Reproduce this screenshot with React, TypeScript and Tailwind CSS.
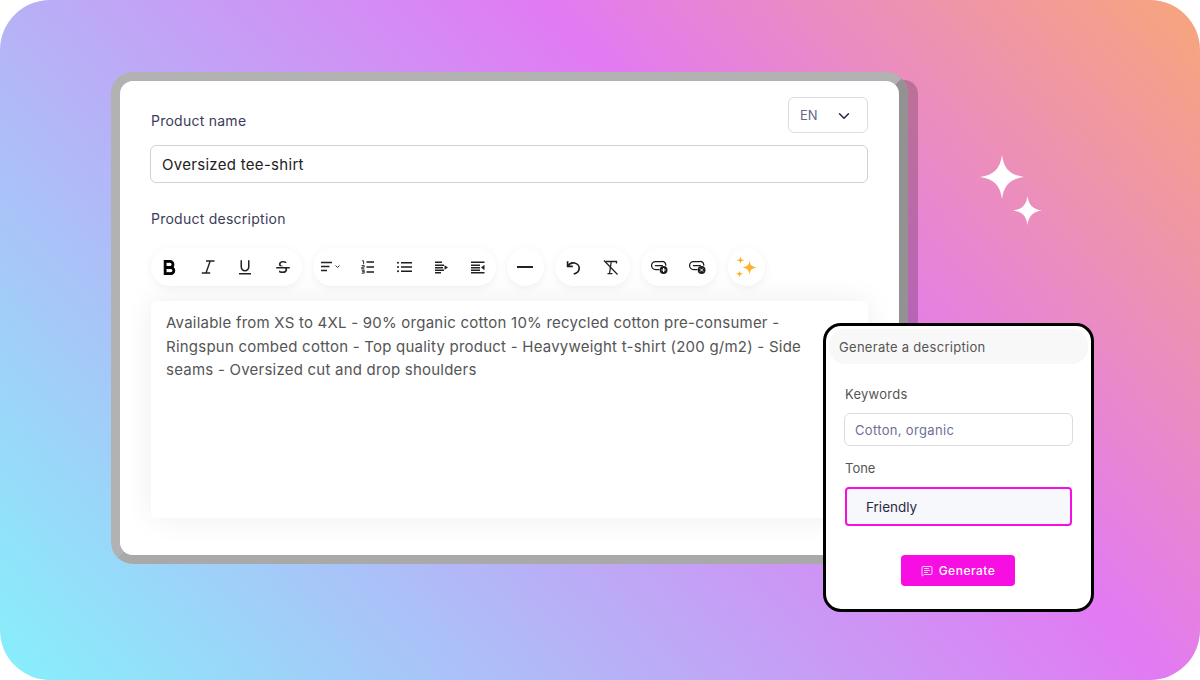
import { RiBold, RiStrikethrough, RiUnderline } from "react-icons/ri";
import { ChevronDown, MessageSquareText } from "lucide-react";

function AlignMenuIcon() {
  return (
    <svg width="20" height="12" viewBox="0 0 20 12" fill="none" stroke="#222" strokeWidth="1.3">
      <path d="M0 1.5h11M0 5.5h8.5M0 9.5h6" />
      <path d="M14.5 4.5l2 2 2-2" strokeWidth="0.9" />
    </svg>
  );
}

function ItalicIcon() {
  return (
    <svg width="14" height="14" viewBox="0 0 14 14" fill="none" stroke="#222" strokeWidth="1.4">
      <path d="M5 1h8.5M9.2 1L5 13M0.8 13h8.4" />
    </svg>
  );
}

function OrderedIcon() {
  return (
    <svg width="13" height="14" viewBox="0 0 13 14" fill="none" stroke="#1c1c1c">
      <path d="M5.5 2h7.5M5.5 7h7.5M5.5 12h7.5" strokeWidth="1.5" />
      <path d="M1 .8h1.6v3.4M.6 5.6h2.6v1.6H.8v1.6h2.6M.6 10.2h2.6v3H.6M1 11.7h2" strokeWidth="0.9" />
    </svg>
  );
}

function BulletIcon() {
  return (
    <svg width="15" height="12" viewBox="0 0 15 12" fill="#1c1c1c">
      <path d="M4 1h11v1.6H4zM4 5.2h11v1.6H4zM4 9.4h11V11H4z" />
      <circle cx="1" cy="1.8" r="1" />
      <circle cx="1" cy="6" r="1" />
      <circle cx="1" cy="10.2" r="1" />
    </svg>
  );
}

function OutdentIcon({ flip }: { flip?: boolean }) {
  // the two alignment buttons only differ by the width of the lines
  return flip ? (
    <svg width="14" height="13" viewBox="0 0 14 13" fill="#222">
      <path d="M0 0.5h13.5v1.4H0zM0 3.5h9v1.4H0zM0 6h9v1.4H0zM0 8.5h9v1.4H0zM0 11h13.5v1.4H0z" />
      <path d="M13.5 3.8v5.4L10 6.5z" />
    </svg>
  ) : (
    <svg width="13" height="13" viewBox="0 0 13 13" fill="#222">
      <path d="M0 0.5h7v1.4H0zM0 3.5h9v1.4H0zM0 6h8v1.4H0zM0 8.5h9v1.4H0zM0 11h6v1.4H0z" />
      <path d="M9.5 4.2v4.6L13 6.5z" />
    </svg>
  );
}

function UndoIcon() {
  return (
    <svg width="15" height="15" viewBox="0 0 15 15" fill="none" stroke="#1c1c1c" strokeWidth="1.7">
      <path d="M1.6 1.2v5.2h5.2" />
      <path d="M1.8 6.2C3.4 3.4 6 2.4 8.6 3c3 .7 5 3.4 4.5 6.2-.4 2.4-2.4 4.2-5.4 4.8" />
    </svg>
  );
}

function ClearFormatIcon() {
  return (
    <svg width="16" height="15" viewBox="0 0 16 15" fill="none" stroke="#222">
      <path d="M2.5 1.5h11v2" strokeWidth="1.3" />
      <path d="M8.2 2L6.5 13.5M4.5 13.6h5" strokeWidth="1.3" />
      <path d="M1 .5l13.5 14" strokeWidth="1.2" />
    </svg>
  );
}

function LinkBadgeIcon({ remove }: { remove?: boolean }) {
  return (
    <svg width="17" height="14" viewBox="0 0 17 14" fill="none">
      <path
        d="M8 9.5H4.6a4 4 0 0 1 0-8h6.2a4 4 0 0 1 4 3.6M4.4 5.5h7"
        stroke="#1c1c1c"
        strokeWidth="1.25"
        strokeLinecap="round"
      />
      <circle cx="12.6" cy="10" r="3.9" fill="#1c1c1c" />
      {remove ? (
        <path d="M11.1 8.5l3 3M14.1 8.5l-3 3" stroke="#fff" strokeWidth="1" />
      ) : (
        <path d="M12.6 8v4M10.6 10h4" stroke="#fff" strokeWidth="1.2" />
      )}
    </svg>
  );
}

function Star({ className }: { className: string }) {
  return (
    <svg className={className} viewBox="0 0 24 24">
      <path d="M12 0C13 7.5 16.5 11 24 12 16.5 13 13 16.5 12 24 11 16.5 7.5 13 0 12 7.5 11 11 7.5 12 0Z" fill="currentColor" />
    </svg>
  );
}

const toolbar = [
  {
    itemClass: "w-[37.75px]",
    icons: [
      <RiBold size={21} className="stroke-black text-black [stroke-width:1.2px]" />,
      <ItalicIcon />,
      <RiUnderline size={18} className="text-[#222]" />,
      <RiStrikethrough size={18} className="text-[#222]" />,
    ],
  },
  {
    itemClass: "w-[36.6px]",
    icons: [<AlignMenuIcon />, <OrderedIcon />, <BulletIcon />, <OutdentIcon />, <OutdentIcon flip />],
  },
  { itemClass: "w-[37px]", icons: [<div className="h-[1.5px] w-[16px] bg-[#222]" />] },
  { itemClass: "w-[37.5px]", icons: [<UndoIcon />, <ClearFormatIcon />] },
  { itemClass: "w-[38px]", icons: [<LinkBadgeIcon />, <LinkBadgeIcon remove />] },
];

export default function App() {
  return (
    <div className="h-[680px] w-[1200px] overflow-hidden bg-white font-['Inter',sans-serif]">
      <div className="relative flex h-full items-start rounded-[50px] bg-[linear-gradient(47.5deg,#86f0fb_0%,#e27af3_64%,#f7a67a_100%)] pl-[111px] pt-[72px]">
        <div className="h-[492px] w-[797px] rounded-[22px] border-[9px] border-[#b2b2b2] border-b-[#a9a9a9] border-r-[#929292] shadow-[18px_0_0_-8px_rgba(0,0,0,0.2)]">
          <div className="h-full rounded-[13px] bg-white pl-[30px] pr-[31px] pt-[16px]">
            <div className="flex items-end justify-between pl-px">
              <label className="pb-[2px] text-[14px] leading-[20px] tracking-[0.25px] text-[#3c3c58]">Product name</label>
              <div className="flex h-[36px] w-[80px] items-center justify-between rounded-[6px] border border-[#dcdce4] pl-[11px] pr-[14px] pt-px text-[13px] text-[#62688c]">
                EN
                <ChevronDown size={18} strokeWidth={2} className="text-[#26264a]" />
              </div>
            </div>
            <div className="mt-[12px] flex h-[38px] items-center rounded-[6px] border border-[#d2d2d6] pl-[11px] pt-[2px] text-[15px] tracking-[0.3px] text-[#222]">
              Oversized tee-shirt
            </div>
            <label className="mt-[26px] block pl-px text-[14px] leading-[20px] tracking-[0.25px] text-[#3c3c58]">Product description</label>
            <div className="ml-px mt-[19px] flex gap-[11px]">
              {toolbar.map((group, i) => (
                <div key={i} className="flex h-[38px] items-center rounded-full bg-white shadow-[0_2px_10px_rgba(0,0,0,0.06)]">
                  {group.icons.map((icon, j) => (
                    <div key={j} className={`flex h-full items-center justify-center ${group.itemClass}`}>
                      {icon}
                    </div>
                  ))}
                </div>
              ))}
              <div className="flex h-[38px] w-[37px] items-center justify-center rounded-full bg-white shadow-[0_2px_10px_rgba(0,0,0,0.06)]">
                <svg width="22" height="22" viewBox="0 0 22 22" fill="#fcb22e">
                  <path d="M14.5 4.5C15 9 16.5 10.5 21.5 11.5 16.5 12.5 15 14 14.5 19 14 14 12.5 12.5 7.5 11.5 12.5 10.5 14 9 14.5 4.5Z" />
                  <path d="M5.5 0.5C5.9 3 6.7 3.8 9.5 4.2 6.7 4.6 5.9 5.5 5.5 8 5.1 5.5 4.3 4.6 1.5 4.2 4.3 3.8 5.1 3 5.5 0.5Z" />
                  <path d="M4.5 14.5C4.8 16.5 5.5 17.2 8 17.7 5.5 18.2 4.8 19 4.5 21.5 4.2 19 3.5 18.2 1 17.7 3.5 17.2 4.2 16.5 4.5 14.5Z" />
                </svg>
              </div>
            </div>
            <div className="ml-px mt-[15px] h-[217px] rounded-[6px] bg-white py-[10px] pl-[15px] pr-[40px] text-[15px] leading-[23.5px] tracking-[0.23px] text-[#555] shadow-[0_0_30px_rgba(0,0,0,0.07)]">
              Available from XS to 4XL - 90% organic cotton 10% recycled cotton pre-consumer - Ringspun combed cotton - Top quality product - Heavyweight t-shirt (200 g/m2) - Side seams - Oversized cut and drop shoulders
            </div>
          </div>
        </div>

        <div className="ml-[72px] mt-[83px] h-[69px] w-[63px] flex-none text-white">
          <Star className="block h-[44px] w-[44px]" />
          <Star className="-mt-[3px] ml-[33px] block h-[29px] w-[29px]" />
        </div>

        {/* floating panel overlapping the editor */}
        <div className="absolute left-[823px] top-[323px] h-[289px] w-[271px] rounded-[18px] border-[3px] border-black bg-white p-[3px]">
          <div className="flex h-[35px] items-center rounded-[16px] bg-[#f8f8f8] pl-[10px] pt-[2px] text-[13px] tracking-[0.3px] text-[#555]">
            Generate a description
          </div>
          <div className="px-[15px]">
            <div className="mt-[21px] pl-px text-[13px] leading-[18px] tracking-[0.25px] text-[#555]">Keywords</div>
            <div className="mt-[10px] flex h-[33px] items-center rounded-[6px] border border-[#dcdcdc] pl-[10px] pt-[3px] text-[13px] tracking-[0.33px] text-[#6b7095]">
              Cotton, organic
            </div>
            <div className="mt-[13px] pl-px text-[13px] leading-[18px] text-[#555]">Tone</div>
            <div className="mx-px mt-[10px] flex h-[39px] items-center rounded-[4px] border-2 border-[#f50fe0] bg-[#f7f8fc] pl-[19px] pt-[2px] text-[13.5px] text-[#2a2a45]">
              Friendly
            </div>
            <div className="mt-[29px] flex justify-center pr-px">
              <button className="flex h-[31px] w-[114px] items-center justify-center gap-[6px] rounded-[4px] bg-[#f70ee2] text-[12px] font-medium tracking-[0.5px] text-white">
                <MessageSquareText size={12} strokeWidth={1.6} />
                Generate
              </button>
            </div>
          </div>
        </div>
      </div>
    </div>
  );
}
